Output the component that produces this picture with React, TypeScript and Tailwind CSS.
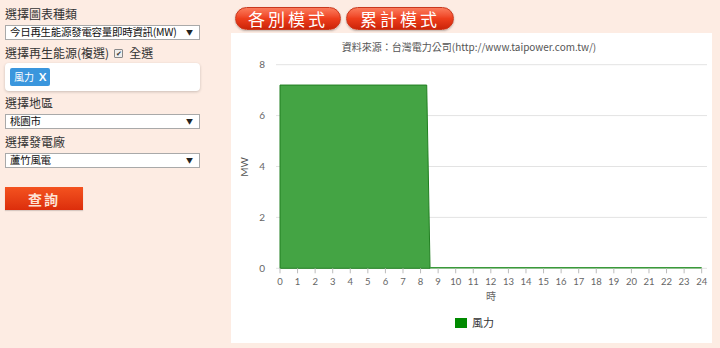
import React from 'react';

const cjk = { fontFamily: '"Noto Sans CJK TC", "Noto Sans", sans-serif' };

function FakeSelect({ text, className = '' }: { text: string; className?: string }) {
  return (
    <div
      className={`flex items-center justify-between w-[195px] h-[15px] bg-white border border-[#a9a9a9] pl-[4px] pr-[6px] text-[10.5px] leading-none text-[#111] whitespace-nowrap overflow-hidden ${className}`}
    >
      <span className="tracking-[-0.3px]">{text}</span>
      <span className="text-[7px] text-[#222]">▼</span>
    </div>
  );
}

function Chart() {
  const x0 = 49;
  const step = 17.57;
  const yZero = 235.3;
  const unit = 25.45;
  const hx = (h: number) => x0 + h * step;
  const vy = (v: number) => yZero - v * unit;
  const grid = [0, 2, 4, 6, 8];
  const hours = Array.from({ length: 25 }, (_, i) => i);

  const area = `M ${hx(0)} ${yZero} L ${hx(0)} ${vy(7.2)} L ${hx(8.35)} ${vy(7.2)} L ${hx(8.54)} ${yZero} Z`;

  return (
    <svg width="481" height="310" viewBox="0 0 481 310" style={cjk}>
      <text x="238" y="18" textAnchor="middle" fontSize="10" fill="#555">
        資料來源：台灣電力公司(http://www.taipower.com.tw/)
      </text>
      {grid.map(g => (
        <g key={g}>
          <line x1="45" x2="476" y1={vy(g)} y2={vy(g)} stroke="#e3e3e3" strokeWidth="1" />
          <text x="34" y={vy(g) + 3.5} textAnchor="end" fontSize="10" fill="#666" fontFamily="Lato, sans-serif">
            {g}
          </text>
        </g>
      ))}
      <path d={area} fill="#44a444" stroke="#217f21" strokeWidth="1" />
      <line x1={hx(8.54)} x2={hx(24)} y1={yZero - 0.5} y2={yZero - 0.5} stroke="#3a9a3a" strokeWidth="1.5" />
      {hours.map(h => (
        <g key={h}>
          <line x1={hx(h)} x2={hx(h)} y1={yZero} y2={yZero + 5} stroke="#bbb" strokeWidth="1" />
          <text x={hx(h)} y="252" textAnchor="middle" fontSize="9.5" fill="#666" fontFamily="Lato, sans-serif">
            {h}
          </text>
        </g>
      ))}
      <text x="260" y="267" textAnchor="middle" fontSize="10" fill="#666">
        時
      </text>
      <text
        x="17"
        y="134"
        textAnchor="middle"
        fontSize="10"
        fill="#555"
        fontFamily="Lato, sans-serif"
        transform="rotate(-90 17 134)"
      >
        MW
      </text>
      <rect x="224" y="285" width="12" height="10" fill="#008a00" />
      <text x="241" y="294" fontSize="11" fill="#333">
        風力
      </text>
    </svg>
  );
}

export default function App() {
  return (
    <div className="w-[720px] h-[348px] bg-[#fdece3] flex overflow-hidden" style={cjk}>
      {/* Left filter column */}
      <div className="w-[231px] pl-[5px] pt-[6px] text-[12px] leading-[16px] text-[#333]">
        <div>選擇圖表種類</div>
        <FakeSelect text="今日再生能源發電容量即時資訊(MW)" className="mt-[3px]" />
        <div className="mt-[5px] flex items-center">
          <span>選擇再生能源(複選)</span>
          <span className="ml-[5px] w-[9px] h-[9px] border border-[#888] bg-[#eee] rounded-[1px] flex items-center justify-center text-[7px] leading-none text-[#333]">
            ✔
          </span>
          <span className="ml-[6px]">全選</span>
        </div>
        <div className="mt-[2px] w-[195px] h-[28px] bg-white rounded-[4px] shadow-[0_1px_3px_rgba(0,0,0,0.2)] flex items-center pl-[5px]">
          <div className="h-[18px] px-[4px] bg-[#3a96dd] rounded-[2px] flex items-center gap-[5px] text-white text-[10px]">
            <span>風力</span>
            <span className="font-bold text-[11px]" style={{ fontFamily: 'Lato, sans-serif' }}>X</span>
          </div>
        </div>
        <div className="mt-[4px]">選擇地區</div>
        <FakeSelect text="桃園市" className="mt-[3px]" />
        <div className="mt-[5px]">選擇發電廠</div>
        <FakeSelect text="蘆竹風電" className="mt-[3px]" />
        <button className="mt-[19px] w-[78px] h-[23px] bg-gradient-to-b from-[#f4521f] to-[#dc2d0b] text-[#fde3d6] text-[14px] font-bold tracking-[2px] shadow-[0_1px_1px_rgba(0,0,0,0.15)]">
          查詢
        </button>
      </div>

      {/* Right chart column */}
      <div className="flex flex-col">
        <div className="flex gap-[5px] pt-[7px] pl-[4px]">
          <button className="w-[106px] h-[23px] rounded-full bg-gradient-to-b from-[#fb7a5a] via-[#ee3e1c] to-[#cc2408] text-white text-[17px] leading-none tracking-[3px] border border-[#c9381d] shadow-[0_1px_2px_rgba(0,0,0,0.25)]">
            各別模式
          </button>
          <button className="w-[108px] h-[23px] rounded-full bg-gradient-to-b from-[#fb7a5a] via-[#ee3e1c] to-[#cc2408] text-white text-[17px] leading-none tracking-[3px] border border-[#c9381d] shadow-[0_1px_2px_rgba(0,0,0,0.25)]">
            累計模式
          </button>
        </div>
        <div className="mt-[3px] w-[481px] h-[310px] bg-white">
          <Chart />
        </div>
      </div>
    </div>
  );
}
